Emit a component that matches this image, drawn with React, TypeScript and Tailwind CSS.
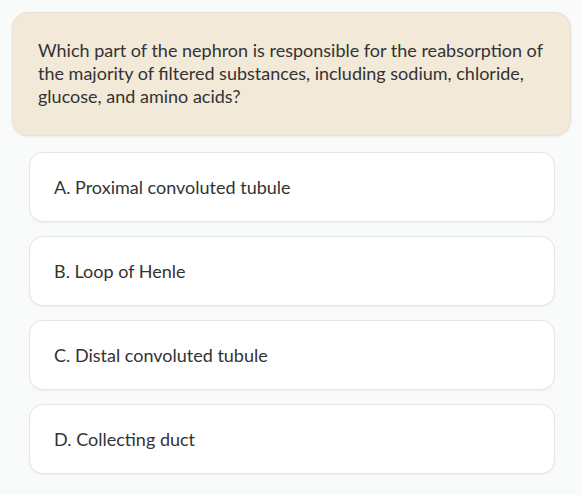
import React from "react";

const options = [
  "A. Proximal convoluted tubule",
  "B. Loop of Henle",
  "C. Distal convoluted tubule",
  "D. Collecting duct",
];

export default function App() {
  return (
    <div
      className="min-h-screen bg-[#f9fafa] p-3 text-[#333333]"
      style={{ fontFamily: "Lato, 'Noto Sans', sans-serif" }}
    >
      {/* 질문 카드 */}
      <div className="mr-[-1px] rounded-2xl border border-[#e9e2d4] bg-[#f2e9d9] pl-[25px] pr-4 pt-[26px] pb-[27px] shadow-[0_1px_3px_rgba(0,0,0,0.08)]">
        <p className="text-[18px] leading-[23px]">
          Which part of the nephron is responsible for the reabsorption of
          <br />
          the majority of filtered substances, including sodium, chloride,
          <br />
          glucose, and amino acids?
        </p>
      </div>

      {/* 보기 목록 */}
      <div className="ml-[17px] mr-[15px] mt-4 flex flex-col gap-[14px]">
        {options.map((opt) => (
          <div
            key={opt}
            className="rounded-[14px] border border-[#e3e6e8] bg-white px-6 py-[22px] text-[18px] leading-6 shadow-[0_1px_2px_rgba(0,0,0,0.05)]"
          >
            {opt}
          </div>
        ))}
      </div>
    </div>
  );
}
